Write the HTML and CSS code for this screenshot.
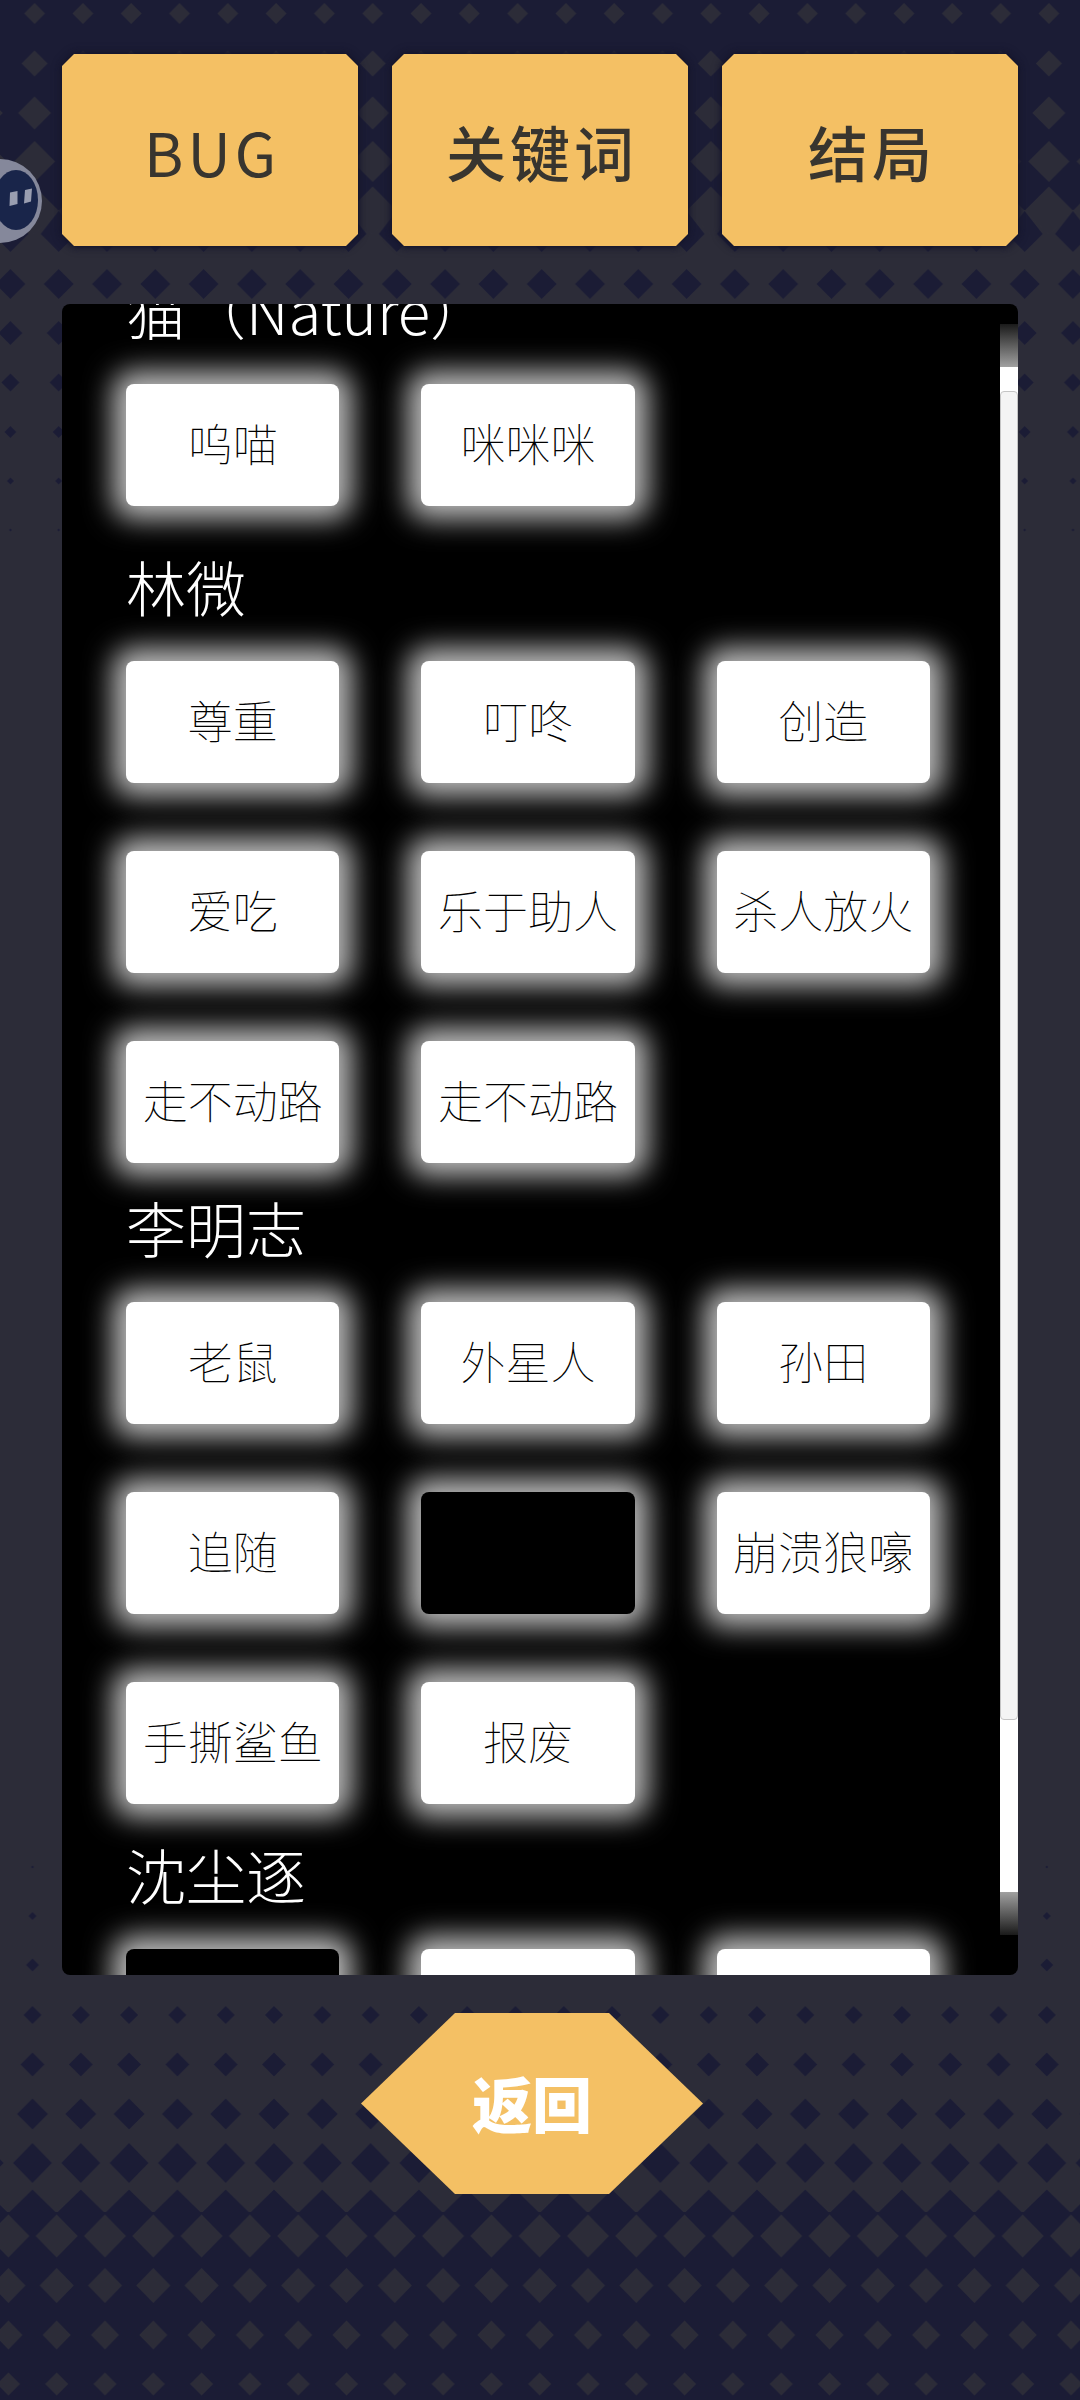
FILE: index.html
```
<!DOCTYPE html>
<html lang="zh-CN">

<head>
  <meta charset="UTF-8">
  <meta name="viewport" content="width=device-width, initial-scale=1.0">
  <title>关键词</title>
  <link rel="stylesheet" href="styles.css">
</head>

<body>
  <!-- diamond halftone, one tile per column, repeated across the window -->
  <svg class="halftone halftone-top" aria-hidden="true">
    <defs>
      <pattern id="tileTop" width="48.3" height="560" patternUnits="userSpaceOnUse">
        <rect width="49" height="210" fill="#1b1c35" />
        <path fill="#2c2c38" d="M34.6 3l10.4 10.5-10.4 10.5-10.4-10.5zM34.6 50.500l13 13-13 13-13-13zM34.600 96.500l16.500 16.500-16.500 16.500-16.500-16.500zM-13.700 96.500l16.500 16.500-16.500 16.500zM34.600 141l20.500 20.500-20.500 20.500-20.500-20.500zM-13.700 141l20.500 20.500-20.500 20.500zM34.600 186.500l24 24-24 24-24-24zM-13.700 186.500l24 24-24 24z" />
        <path fill="#1b1c35" d="M10.400 211l18 23-18 18-18-18zM58.700 211l18 23-18 18-18-18zM10.400 269l15 15-15 15-15-15zM58.700 269l15 15-15 15-15-15zM10.400 321l12 12-12 12-12-12zM58.700 321l12 12-12 12-12-12zM10.400 373.500l9 9-9 9-9-9zM10.400 426l6 6-6 6-6-6zM10.400 477.500l3.500 3.500-3.500 3.500-3.500-3.500zM10.400 528.500l1.500 1.500-1.500 1.500-1.500-1.500z" />
      </pattern>
    </defs>
    <rect width="100%" height="560" fill="url(#tileTop)" />
  </svg>
  <svg class="halftone halftone-bottom" aria-hidden="true">
    <defs>
      <pattern id="tileBottom" width="48.3" height="560" patternUnits="userSpaceOnUse">
        <rect y="372" width="49" height="188" fill="#1b1c35" />
        <path fill="#1b1c35" d="M32.500 25.500l1.500 1.500-1.500 1.500-1.500-1.500zM32.500 72l4 4-4 4-4-4zM32.500 118.500l6.500 6.500-6.500 6.500-6.500-6.500zM32.500 166l9 9-9 9-9-9zM32.500 212.500l12 12-12 12-12-12zM32.500 258.500l15.500 15.500-15.500 15.500-15.500-15.500zM32.500 303l19.500 20-19.500 20-19.500-20zM-15.800 303l19.500 20-19.500 20zM32.500 349.500l23.500 23-23.500 23-23.500-23zM-15.800 349.500l23.500 23-23.500 23z" />
        <path fill="#2c2c38" d="M8.400 374.500l21 21.500-21 21.500-21-21.500zM56.700 374.500l21 21.500-21 21.500-21-21.500zM8.400 428l17 17.500-17 17.500-17-17.500zM56.700 428l17 17.500-17 17.500-17-17.500zM8.400 480.500l14 14.500-14 14.500-14-14.500zM56.700 480.500l14 14.500-14 14.500-14-14.500zM8.400 532.500l11.500 11.500-11.500 11.500-11.500-11.500zM56.700 532.500l11.500 11.500-11.500 11.500-11.500-11.500z" />
      </pattern>
    </defs>
    <rect width="100%" height="560" fill="url(#tileBottom)" />
  </svg>

  <!-- floating assistant ball, half off the left edge -->
  <svg class="ball" viewBox="0 0 42 84" aria-hidden="true">
    <circle cx="0" cy="42" r="42" fill="#85889b" />
    <ellipse cx="16" cy="41" rx="22" ry="30" fill="#19254a" />
    <path fill="#9a9eb0" d="M10 33.500l7.500-1.500v13l-8 2zM25 31l7-1.500-1 13-7 2z" />
  </svg>

  <div class="page">
    <nav class="tabs">
      <button type="button" class="latin">BUG</button>
      <button type="button">关键词</button>
      <button type="button">结局</button>
    </nav>

    <main class="panel">
      <div class="list" id="list">
        <section class="group group-cat">
          <h2>猫（Nature）</h2>
          <div class="cards">
            <button type="button" class="card">呜喵</button>
            <button type="button" class="card">咪咪咪</button>
          </div>
        </section>

        <section class="group group-lin">
          <h2>林微</h2>
          <div class="cards">
            <button type="button" class="card">尊重</button>
            <button type="button" class="card">叮咚</button>
            <button type="button" class="card">创造</button>
            <button type="button" class="card">爱吃</button>
            <button type="button" class="card">乐于助人</button>
            <button type="button" class="card">杀人放火</button>
            <button type="button" class="card">走不动路</button>
            <button type="button" class="card">走不动路</button>
          </div>
        </section>

        <section class="group">
          <h2>李明志</h2>
          <div class="cards">
            <button type="button" class="card">老鼠</button>
            <button type="button" class="card">外星人</button>
            <button type="button" class="card">孙田</button>
            <button type="button" class="card">追随</button>
            <button type="button" class="card locked"></button>
            <button type="button" class="card">崩溃狼嚎</button>
            <button type="button" class="card">手撕鲨鱼</button>
            <button type="button" class="card">报废</button>
          </div>
        </section>

        <section class="group">
          <h2>沈尘逐</h2>
          <div class="cards">
            <button type="button" class="card locked"></button>
            <button type="button" class="card"></button>
            <button type="button" class="card"></button>
          </div>
        </section>
      </div>

      <div class="scrollbar">
        <div class="track">
          <div class="thumb"></div>
        </div>
      </div>
    </main>

    <button type="button" class="back">返回</button>
  </div>

  <script>
    // open the list just past the top of the first heading
    document.getElementById('list').scrollTop = 39;
  </script>
</body>

</html>
```

FILE: styles.css
```
* {
  box-sizing: border-box;
}

body {
  margin: 0;
  background-color: #2c2c38;
  font-family: "Noto Sans CJK SC", "Noto Sans", sans-serif;
}

button {
  border: none;
  padding: 0;
  font-family: inherit;
  cursor: pointer;
}

.halftone {
  position: absolute;
  left: 0;
  width: 100%;
  height: 560px;
}

.halftone-top {
  top: 0;
}

.halftone-bottom {
  bottom: 0;
}

.ball {
  position: absolute;
  left: 0;
  top: 159px;
  width: 42px;
  height: 84px;
}

.page {
  position: relative;
  display: flex;
  flex-direction: column;
  height: 100vh;
  padding: 54px 62px 206px;
}

/* top tabs */
.tabs {
  display: flex;
  gap: 34px;
  margin-bottom: 58px;
  filter: drop-shadow(0 0 3px #15152c) drop-shadow(0 0 3px #15152c);
}

.tabs button {
  flex: 1;
  height: 192px;
  padding-left: 4px;
  background-color: #f4c064;
  color: #38352f;
  font-size: 60px;
  font-weight: 500;
  letter-spacing: 4px;
  clip-path: polygon(12px 0, calc(100% - 12px) 0, 100% 12px, 100% calc(100% - 12px), calc(100% - 12px) 100%, 12px 100%, 0 calc(100% - 12px), 0 12px);
}

.tabs .latin {
  font-weight: 400;
}

/* keyword panel */
.panel {
  display: flex;
  flex: 1;
  min-height: 0;
  background-color: #000000;
  border-radius: 8px;
  overflow: hidden;
}

.list {
  flex: 1;
  padding: 0 70px 0 64px;
  overflow-y: auto;
  scrollbar-width: none;
}

.group {
  margin-bottom: 26px;
}

.group-cat {
  margin-bottom: 36px;
}

.group-lin {
  margin-bottom: 20px;
}

.group h2 {
  margin: 0 0 31px;
  color: #ffffff;
  font-size: 60px;
  font-weight: 300;
  line-height: 88px;
}

.cards {
  display: grid;
  grid-template-columns: repeat(3, 1fr);
  gap: 68px 82px;
}

.card {
  height: 122px;
  padding-bottom: 5px;
  background-color: #ffffff;
  color: #000000;
  border-radius: 8px;
  font-size: 45px;
  font-weight: 100;
  white-space: nowrap;
  box-shadow: 0 0 28px 13px rgba(255, 255, 255, 0.74);
}

.card.locked {
  background-color: #000000;
}

.scrollbar {
  display: flex;
  width: 18px;
  padding: 20px 0 40px;
}

.track {
  flex: 1;
  padding: 67px 0 215px;
  background: linear-gradient(#1a1a1a, #a0a0a0) top / 100% 43px no-repeat,
    linear-gradient(#a0a0a0, #1a1a1a) bottom / 100% 43px no-repeat,
    linear-gradient(#ffffff, #ffffff) center / 100% calc(100% - 86px) no-repeat;
}

.thumb {
  height: 100%;
  background-color: #f4f4f4;
  border: 1px solid #c4c4c4;
  border-radius: 4px;
}

/* back button */
.back {
  align-self: center;
  width: 342px;
  height: 181px;
  margin: 38px 16px 0 0;
  padding-bottom: 5px;
  flex-shrink: 0;
  background-color: #f4c064;
  color: #ffffff;
  font-size: 60px;
  font-weight: 900;
  clip-path: polygon(94px 0, calc(100% - 94px) 0, 100% 50%, calc(100% - 94px) 100%, 94px 100%, 0 50%);
}
```
